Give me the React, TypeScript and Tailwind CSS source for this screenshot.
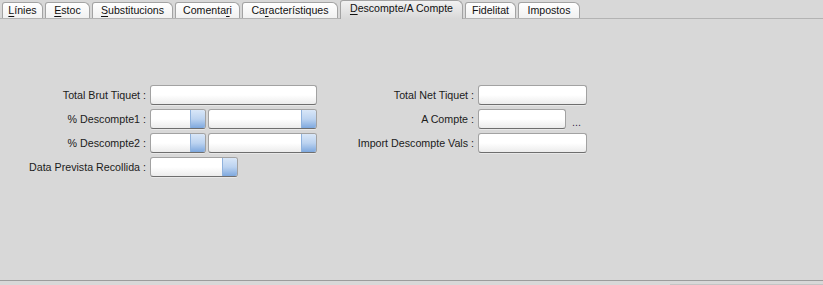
import type { ReactNode } from "react";

type Tab = { before?: string; key?: string; after: string; width: string; active?: boolean };

const tabs: Tab[] = [
  { key: "L", after: "ínies", width: "w-[41px]" },
  { key: "E", after: "stoc", width: "w-[45px]" },
  { key: "S", after: "ubstitucions", width: "w-[81px]" },
  { before: "Comenta", key: "r", after: "i", width: "w-[65px]" },
  { before: "Ca", key: "r", after: "acterístiques", width: "w-[96px]" },
  { key: "D", after: "escompte/A Compte", width: "w-[123px]", active: true },
  { after: "Fidelitat", width: "w-[51px]" },
  { after: "Impostos", width: "w-[62px]" },
];

function TabButton({ tab }: { tab: Tab }) {
  return (
    <div
      className={`${tab.width} flex shrink-0 items-center justify-center overflow-visible rounded-tl-[3px] rounded-tr-[6px] border border-b-0 border-[#a3a3a3] ${
        tab.active
          ? "relative -mb-px h-[19px] bg-gradient-to-b from-[#f2f2f2] to-[#d8d8d8] pb-[2px]"
          : "h-[16px] bg-gradient-to-b from-white to-[#f1f1f1]"
      }`}
    >
      <span className="whitespace-nowrap text-[10.6px] text-[#111]">
        {tab.before}
        {tab.key && <span className="underline underline-offset-[2px]">{tab.key}</span>}
        {tab.after}
      </span>
    </div>
  );
}

function Field({ width, spin }: { width: string; spin?: boolean }) {
  return (
    <div
      className={`${width} flex h-[20px] overflow-hidden rounded-[3px] border border-[#a2a2a2] border-b-[#6e6e6e] bg-gradient-to-b from-white via-white to-[#ececec] shadow-[0_1px_0_#e8e8e8]`}
    >
      <div className="flex-1" />
      {spin && (
        <div className="w-[15px] border-l border-[#8fb2dd] bg-gradient-to-b from-[#d9e7f8] via-[#bcd3f0] to-[#7ea8de]" />
      )}
    </div>
  );
}

function Label({ children }: { children: ReactNode }) {
  return <div className="flex h-[20px] items-center justify-end whitespace-nowrap text-[#1b1b1b]">{children}</div>;
}

export default function App() {
  return (
    <div className="flex h-[285px] w-[823px] flex-col bg-[#d8d8d8] font-['Liberation_Sans',Arial,sans-serif] text-[10.7px]">
      <div className="flex h-[19px] items-end gap-[2px] border-b border-[#b3b3b3] pl-[2px]">
        {tabs.map((t) => (
          <TabButton key={t.after} tab={t} />
        ))}
      </div>

      <div className="flex flex-1 pt-[66px]">
        <div className="grid w-[317px] grid-cols-[146px_167px] content-start gap-x-[4px] gap-y-[4px]">
          <Label>Total Brut Tiquet :</Label>
          <Field width="w-[167px]" />
          <Label>% Descompte1 :</Label>
          <div className="flex gap-[2px]">
            <Field width="w-[56px]" spin />
            <Field width="w-[109px]" spin />
          </div>
          <Label>% Descompte2 :</Label>
          <div className="flex gap-[2px]">
            <Field width="w-[56px]" spin />
            <Field width="w-[109px]" spin />
          </div>
          <Label>Data Prevista Recollida :</Label>
          <Field width="w-[88px]" spin />
        </div>

        <div className="grid grid-cols-[157px_120px] content-start gap-x-[4px] gap-y-[4px]">
          <Label>Total Net Tiquet :</Label>
          <Field width="w-[109px]" />
          <Label>A Compte :</Label>
          <div className="flex items-end gap-[6px]">
            <Field width="w-[88px]" />
            <span className="pb-[1px] leading-none text-[#3a2a4a]">...</span>
          </div>
          <Label>Import Descompte Vals :</Label>
          <Field width="w-[109px]" />
        </div>
      </div>

      <div className="h-px bg-[#9c9c9c]" />
      <div className="flex h-[4px] items-end justify-end">
        <div className="h-px w-[153px] bg-[#c4c4c4]" />
      </div>
    </div>
  );
}
